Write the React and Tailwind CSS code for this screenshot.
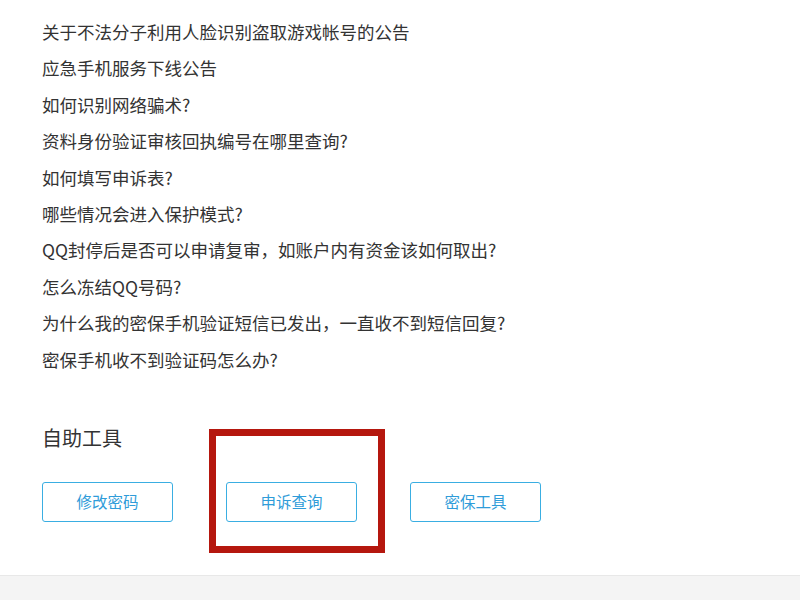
import React from "react";

const questions = [
  "关于不法分子利用人脸识别盗取游戏帐号的公告",
  "应急手机服务下线公告",
  "如何识别网络骗术?",
  "资料身份验证审核回执编号在哪里查询?",
  "如何填写申诉表?",
  "哪些情况会进入保护模式?",
  "QQ封停后是否可以申请复审，如账户内有资金该如何取出?",
  "怎么冻结QQ号码?",
  "为什么我的密保手机验证短信已发出，一直收不到短信回复?",
  "密保手机收不到验证码怎么办?",
];

const tools = ["修改密码", "申诉查询", "密保工具"];

export default function App() {
  return (
    <div
      className="relative w-[800px] h-[600px] overflow-hidden bg-white text-[#333]"
      style={{ fontFamily: '"Noto Sans CJK SC", "Noto Sans", sans-serif' }}
    >
      <div className="h-[575px] pl-[42px] pt-[14px]">
        {/* question list */}
        <ul className="flex flex-col">
          {questions.map((q) => (
            <li key={q} className="text-[17.5px] leading-[36.4px] whitespace-nowrap">
              {q}
            </li>
          ))}
        </ul>

        {/* self-service tools */}
        <h3 className="mt-[45px] text-[20px] leading-[30px]">自助工具</h3>
        <div className="mt-[29px] flex gap-[53px]">
          {tools.map((t) => (
            <button
              key={t}
              className="w-[131px] h-[40px] rounded-[3px] border border-[#3aaee2] text-[15.5px] text-[#2f9cd9] bg-white"
            >
              {t}
            </button>
          ))}
        </div>
      </div>

      {/* footer strip */}
      <div className="h-[25px] bg-[#f4f4f4] border-t border-[#e8e8e8]" />

      {/* annotation box */}
      <div className="absolute left-[209px] top-[429px] w-[176px] h-[124px] border-[7px] border-[#b5170e]" />
    </div>
  );
}
